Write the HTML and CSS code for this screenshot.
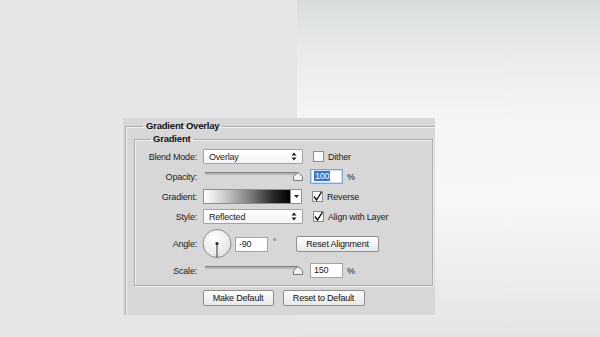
FILE: index.html
```html
<!DOCTYPE html>
<html lang="en">
<head>
  <meta charset="UTF-8" />
  <title>Gradient Overlay</title>
  <link rel="stylesheet" href="styles.css">
</head>
<body>
  <div class="panel">
    <fieldset class="group outer">
      <legend>Gradient Overlay</legend>

      <fieldset class="group inner">
        <legend>Gradient</legend>

        <!-- Blend mode -->
        <div class="row">
          <span class="label">Blend Mode:</span>
          <div class="select">
            <span>Overlay</span>
            <svg class="updown" width="6" height="9" viewBox="0 0 6 9"><path d="M3 0.5L5.5 3.5H0.5Z M3 8.5L0.5 5.5H5.5Z" fill="#222"/></svg>
          </div>
          <label class="check"><span class="box"></span>Dither</label>
        </div>

        <!-- Opacity -->
        <div class="row">
          <span class="label">Opacity:</span>
          <svg class="slider" width="100" height="15" viewBox="0 0 100 15">
            <rect x="2" y="3" width="93" height="3" rx="1" fill="#b4b4b4"/>
            <rect x="2" y="3" width="93" height="1" fill="#7f7f7f"/>
            <path d="M90.5 11.5V7.5L95 3.5L99.5 7.5V11.5Z" fill="#f2f2f2" stroke="#7a7a7a"/>
          </svg>
          <div class="field focus"><span class="sel">100</span></div>
          <span class="unit">%</span>
        </div>

        <!-- Gradient -->
        <div class="row">
          <span class="label">Gradient:</span>
          <div class="swatch">
            <div class="ramp"></div>
            <div class="drop">
              <svg width="5" height="3" viewBox="0 0 5 3"><path d="M0 0H5L2.5 3Z" fill="#222"/></svg>
            </div>
          </div>
          <label class="check"><span class="box on">
            <svg width="11" height="11" viewBox="0 0 11 11"><path d="M2 5.5L4.5 9L9.5 1" fill="none" stroke="#111" stroke-width="1.4"/></svg>
          </span>Reverse</label>
        </div>

        <!-- Style -->
        <div class="row">
          <span class="label">Style:</span>
          <div class="select">
            <span>Reflected</span>
            <svg class="updown" width="6" height="9" viewBox="0 0 6 9"><path d="M3 0.5L5.5 3.5H0.5Z M3 8.5L0.5 5.5H5.5Z" fill="#222"/></svg>
          </div>
          <label class="check"><span class="box on">
            <svg width="11" height="11" viewBox="0 0 11 11"><path d="M2 5.5L4.5 9L9.5 1" fill="none" stroke="#111" stroke-width="1.4"/></svg>
          </span>Align with Layer</label>
        </div>

        <!-- Angle -->
        <div class="row tall">
          <span class="label">Angle:</span>
          <svg class="dial" width="30" height="30" viewBox="0 0 30 30">
            <defs>
              <radialGradient id="dialBg" cx="0.4" cy="0.35" r="0.7">
                <stop offset="0" stop-color="#ffffff"/>
                <stop offset="1" stop-color="#e2e2e2"/>
              </radialGradient>
            </defs>
            <circle cx="15" cy="14.5" r="14" fill="url(#dialBg)" stroke="#8a8a8a"/>
            <line x1="15" y1="14.5" x2="15" y2="28.5" stroke="#333" stroke-width="1"/>
            <circle cx="15" cy="14.5" r="1.6" fill="#222"/>
          </svg>
          <div class="field angle">-90</div>
          <span class="deg">°</span>
          <button class="btn reset-align">Reset Alignment</button>
        </div>

        <!-- Scale -->
        <div class="row scale">
          <span class="label">Scale:</span>
          <svg class="slider" width="100" height="15" viewBox="0 0 100 15">
            <rect x="2" y="3" width="93" height="3" rx="1" fill="#b4b4b4"/>
            <rect x="2" y="3" width="93" height="1" fill="#7f7f7f"/>
            <path d="M90.5 11.5V7.5L95 3.5L99.5 7.5V11.5Z" fill="#f2f2f2" stroke="#7a7a7a"/>
          </svg>
          <div class="field">150</div>
          <span class="unit">%</span>
        </div>
      </fieldset>

      <div class="actions">
        <button class="btn make">Make Default</button>
        <button class="btn restore">Reset to Default</button>
      </div>
    </fieldset>
  </div>
</body>
</html>
```

FILE: styles.css
```css
* { box-sizing: border-box; }
body {
  margin: 0;
  height: 337px;
  overflow: hidden;
  font-family: 'Liberation Sans', Arial, sans-serif;
  font-size: 9px;
  letter-spacing: -0.2px;
  color: #1c1c1c;
  background:
    linear-gradient(to right, #e4e6e7 297px, transparent 297px),
    linear-gradient(#d9dcdd 0px, #e8eaeb 50px, #f4f5f6 120px, #f6f7f8 200px, #eceeef 270px, #e2e4e5 337px);
}
.panel {
  margin: 118px 0 0 123px;
  width: 312px;
  height: 197px;
  background: #d7d7d7;
  overflow: hidden;
}
.group {
  margin: 0;
  padding: 0;
  min-width: 0;
  border: 1px solid #acacac;
  box-shadow: inset 1px 1px 0 #f2f2f2;
}
.group legend {
  padding: 0 3px;
  font-weight: bold;
  font-size: 9.5px;
  line-height: 12px;
  color: #111;
}
.outer {
  margin: 2px 0 0 2px;
  height: 220px;
  border-right: none;
  border-bottom: none;
}
.outer > legend {
  margin-left: 17px;
}
.inner {
  margin: 1px 0 0 8px;
  width: 299px;
  padding: 4px 0 7px 0;
  box-shadow: inset 1px 1px 0 #f2f2f2, 1px 1px 0 #f2f2f2;
}
.inner > legend {
  margin-left: 15px;
}
.row {
  display: flex;
  align-items: center;
  height: 15px;
  margin-top: 5px;
}
.row:first-of-type { margin-top: 0; }
.row.tall {
  height: 30px;
  margin-top: 5px;
}
.row.scale { margin-top: 4px; }
.label {
  width: 62px;
  text-align: right;
  margin-right: 6px;
}
.select {
  width: 100px;
  height: 15px;
  display: flex;
  align-items: center;
  justify-content: space-between;
  padding: 0 5px 0 5px;
  background: linear-gradient(#ffffff, #f4f4f4);
  border: 1px solid #a3a3a3;
  border-radius: 1px;
}
.check {
  display: flex;
  align-items: center;
  margin-left: 10px;
}
.box {
  width: 11px;
  height: 11px;
  margin-right: 4px;
  background: #fafafa;
  border: 1px solid #8c8c8c;
  display: flex;
  align-items: center;
  justify-content: center;
}
.box.on svg { display: block; flex: none; margin: -1px; }
.slider {
  display: block;
  width: 100px;
}
.field {
  width: 33px;
  height: 15px;
  margin-left: 7px;
  padding: 0 3px;
  line-height: 13px;
  background: #fff;
  border: 1px solid #a3a3a3;
}
.field.focus {
  border-color: #7aa7d8;
  box-shadow: inset 0 0 0 1px #c9dcf1;
}
.sel {
  background: #3478d4;
  color: #fff;
  padding: 0 1px;
}
.unit {
  margin-left: 4px;
}
.swatch {
  width: 99px;
  height: 15px;
  display: flex;
  border: 1px solid #8f8f8f;
  background: #fff;
}
.ramp {
  flex: 1;
  background: linear-gradient(to right, #ffffff 0%, #c9c9c9 25%, #7a7a7a 55%, #2a2a2a 80%, #000 100%);
}
.drop {
  width: 11px;
  border-left: 1px solid #8f8f8f;
  display: flex;
  align-items: center;
  justify-content: center;
  background: #fff;
}
.dial {
  display: block;
  margin-left: -1px;
}
.field.angle {
  margin-left: 3px;
}
.deg {
  margin-left: 5px;
  align-self: flex-start;
  margin-top: 8px;
  font-size: 8px;
}
.btn {
  font-family: inherit;
  font-size: 9px;
  letter-spacing: -0.2px;
  color: #111;
  height: 16px;
  padding: 0;
  background: linear-gradient(#fefefe, #e9e9e9);
  border: 1px solid #8e8e8e;
  border-radius: 2px;
}
.reset-align {
  width: 83px;
  margin-left: 20px;
}
.actions {
  display: flex;
  justify-content: center;
  gap: 9px;
  width: 315px;
  margin-top: 4px;
}
.make { width: 71px; }
.restore { width: 82px; }
```
